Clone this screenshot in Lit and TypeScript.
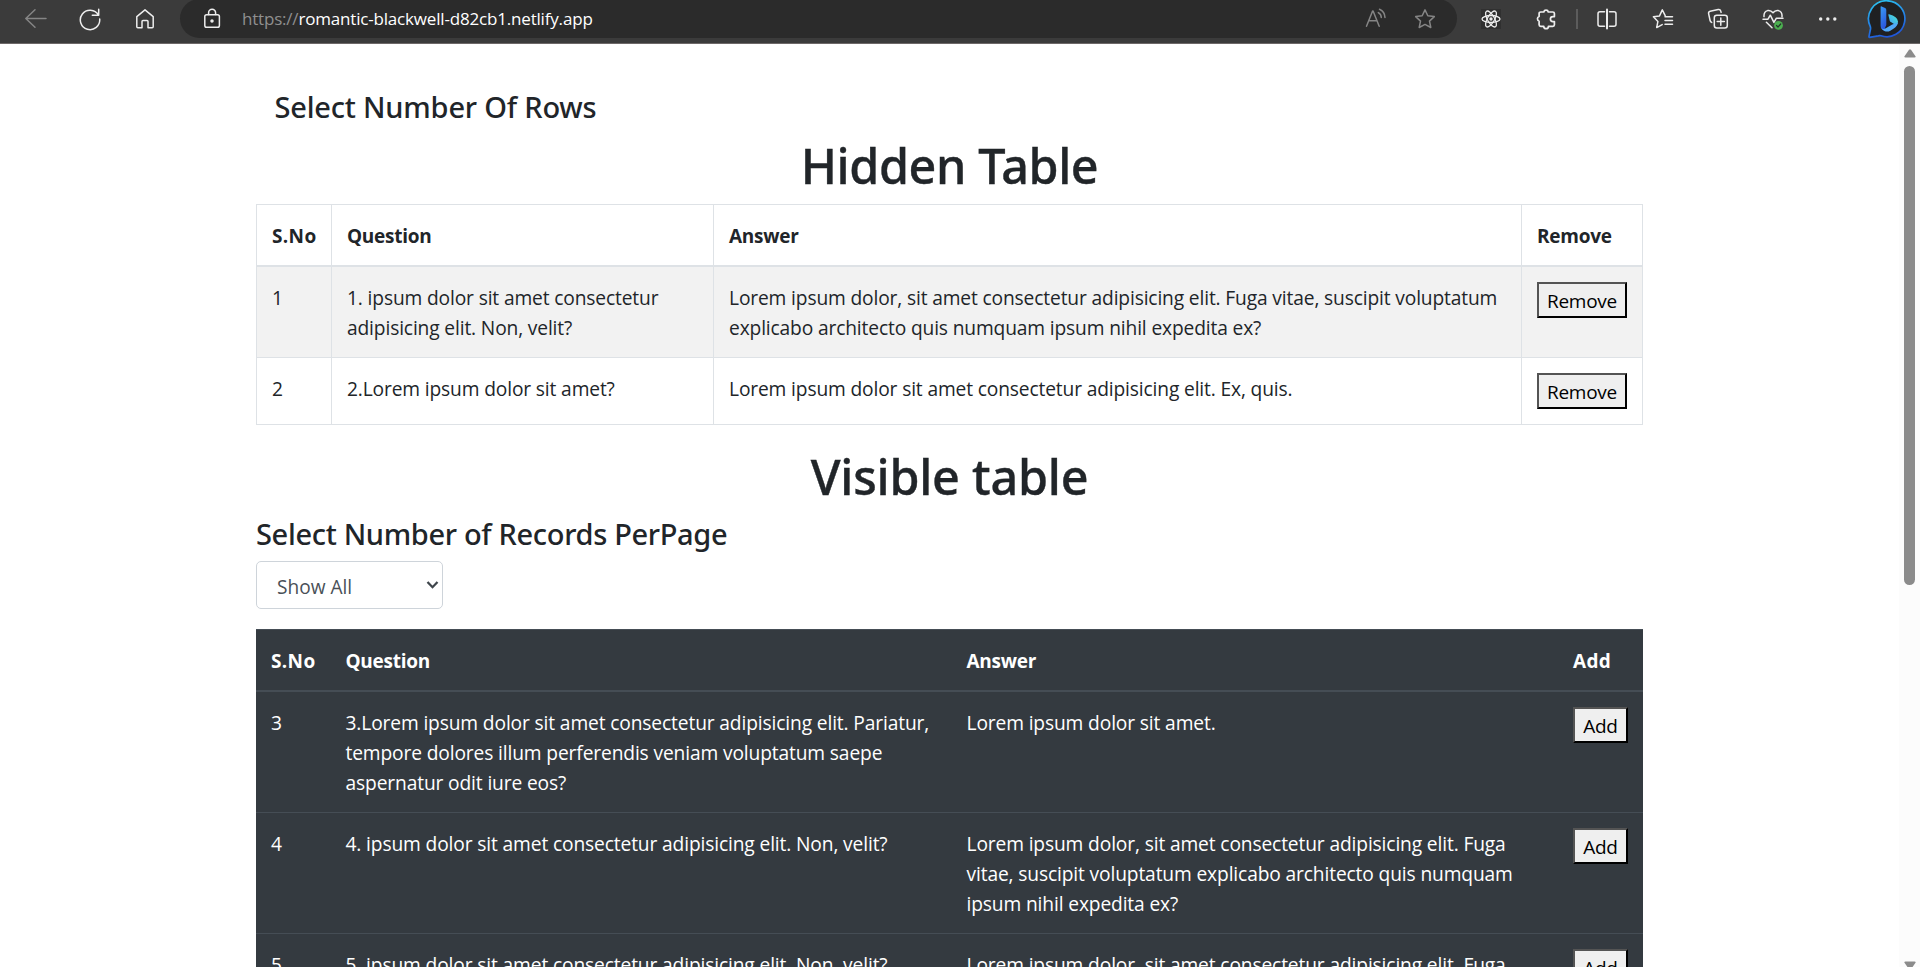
import { LitElement, html, css, svg } from "lit";
import { customElement } from "lit/decorators.js";
import { classMap } from "lit/directives/class-map.js";

interface Row {
  no: number;
  question: string;
  answer: string;
}

const hiddenRows: Row[] = [
  {
    no: 1,
    question: "1. ipsum dolor sit amet consectetur\nadipisicing elit. Non, velit?",
    answer:
      "Lorem ipsum dolor, sit amet consectetur adipisicing elit. Fuga vitae, suscipit voluptatum\nexplicabo architecto quis numquam ipsum nihil expedita ex?",
  },
  {
    no: 2,
    question: "2.Lorem ipsum dolor sit amet?",
    answer: "Lorem ipsum dolor sit amet consectetur adipisicing elit. Ex, quis.",
  },
];

const longAnswer =
  "Lorem ipsum dolor, sit amet consectetur adipisicing elit. Fuga\nvitae, suscipit voluptatum explicabo architecto quis numquam\nipsum nihil expedita ex?";

const visibleRows: Row[] = [
  {
    no: 3,
    question:
      "3.Lorem ipsum dolor sit amet consectetur adipisicing elit. Pariatur,\ntempore dolores illum perferendis veniam voluptatum saepe\naspernatur odit iure eos?",
    answer: "Lorem ipsum dolor sit amet.",
  },
  { no: 4, question: "4. ipsum dolor sit amet consectetur adipisicing elit. Non, velit?", answer: longAnswer },
  { no: 5, question: "5. ipsum dolor sit amet consectetur adipisicing elit. Non, velit?", answer: longAnswer },
];

const icons = {
  back: svg`<path d="M23 11.500H3M12 2.700L2.800 11.500l9.200 8.800"/>`,
  reload: svg`<path d="M20.400 8A9.700 9.700 0 1 0 21.700 12M20.700 2.200v6h-6.400"/>`,
  home: svg`<path d="M3.800 9.600L12 2.800l8.200 6.800v10.200q0 1-1 1h-4.200v-6.200q0-1-1-1h-4q-1 0-1 1v6.200H4.800q-1 0-1-1z"/>`,
  lock: svg`<rect x="4.800" y="7.800" width="14.600" height="12.400" rx="1.800"/><path d="M8.600 7.600V5.800a3.500 3.500 0 0 1 7 0v1.800"/><circle cx="12" cy="14" r="1" fill="currentColor"/>`,
  aloud: svg`<path d="M2.500 19.200L8.600 4h.5l6.100 15.200M4.700 13.800h8.300M14.300 5.600q3 1.700 3 5M15.500 2.300q5.300 2.500 5.500 8.200"/>`,
  star: svg`<path d="M12 2.900l2.800 5.900 6.500.8-4.800 4.500 1.300 6.400L12 17.400l-5.800 3.100 1.300-6.400-4.800-4.500 6.500-.8z"/>`,
  atom: svg`<rect x="2" y="2" width="20" height="20" fill="#303030" stroke="none"/><g stroke-width="1.300"><ellipse cx="12" cy="12" rx="9" ry="3.500"/><ellipse cx="12" cy="12" rx="9" ry="3.500" transform="rotate(60 12 12)"/><ellipse cx="12" cy="12" rx="9" ry="3.500" transform="rotate(120 12 12)"/></g><circle cx="12" cy="12" r="1.700" fill="currentColor" stroke="none"/>`,
  puzzle: svg`<path stroke-width="1.700" d="M6.700 5h3.100a2.300 2.300 0 0 1 4.500 0h4.500q1.600 0 1.600 1.600v3h-1.500a2.500 2.500 0 0 0 0 5h1.500v3.200q0 1.600-1.600 1.600h-4.400a2.300 2.300 0 0 1-4.600 0H6.700q-1.600 0-1.600-1.600v-3.600a2.500 2.500 0 0 1 0-4.700V6.600Q5.100 5 6.700 5z"/>`,
  split: svg`<path d="M9.500 4.800H5q-2 0-2 2v10.400q0 2 2 2h4.500M14.500 4.800H19q2 0 2 2v10.400q0 2-2 2h-4.500"/><path stroke-width="2" d="M12 2.500v19"/>`,
  favorites: svg`<path d="M14.200 8.600L11.300 2.900 8.500 8.900l-6.100.9 4.500 4.600-1.200 6.200 5.500-3M14 9.800h7.500M14 13.600h7.500M14 17.200h7.500"/>`,
  collections: svg`<rect x="8.300" y="8.200" width="13" height="12.800" rx="2.500"/><path d="M14.800 11v7.200M11.200 14.600h7.200M5.700 15.400q-1.300-.5-1.600-1.900L2.600 6.700q-.4-2 1.600-2.500l8-1.700q2-.4 2.500 1.400l.4 1.500"/>`,
  heart: svg`<path d="M3 9.600q-.4-4.900 3.600-6 3.200-.6 5.400 2.200 2.200-2.800 5.400-2.200 4 1.100 3.600 6M2 12.200h5l2.300-4 3.600 7.200 2.500-4.200H22M5.400 15.200l5.600 5.600"/><circle cx="17.500" cy="18.400" r="4.400" fill="#4caf50" stroke="none"/><path d="M15.500 18.500l1.500 1.500 2.700-3" stroke="#23352a" stroke-width="1.200"/>`,
  dots: svg`<g fill="currentColor" stroke="none"><circle cx="4.700" cy="12" r="1.700"/><circle cx="11.800" cy="12" r="1.700"/><circle cx="18.800" cy="12" r="1.700"/></g>`,
};

@customElement("browser-bar")
export class BrowserBar extends LitElement {
  static styles = css`
    :host {
      display: flex;
      height: 43px;
      align-items: flex-start;
      background: #3b3b3b;
      border-bottom: 1px solid #6d6868;
      color: #ededed;
      font-family: "Open Sans", "Noto Sans", sans-serif;
    }
    .icon {
      width: 24px;
      height: 24px;
      flex: none;
      margin-top: 7px;
      fill: none;
      stroke: currentColor;
      stroke-width: 1.5;
      stroke-linejoin: round;
      stroke-linecap: round;
    }
    .dim {
      color: #858585;
    }
    .nav {
      display: flex;
      gap: 31px;
      padding: 0 23px;
      width: 134px;
    }
    .address {
      display: flex;
      width: 1277px;
      height: 39px;
      margin-top: -1px;
      border-radius: 20px;
      background: #2b2b2b;
      box-sizing: border-box;
      padding: 1px 20px 0;
    }
    .url {
      flex: 1;
      padding-left: 18px;
      line-height: 38px;
      font-size: 17px;
      letter-spacing: -0.180px;
      color: #fff;
      white-space: nowrap;
    }
    .scheme {
      color: #8f8f8f;
      letter-spacing: -0.2px;
    }
    .address .icon + .icon {
      margin-left: 25px;
    }
    .ext {
      display: flex;
      gap: 31px;
      margin-left: 22px;
    }
    .sep {
      width: 2px;
      height: 20px;
      margin: 9px 17px 0 18px;
      background: #5c5c5c;
    }
    .tools {
      display: flex;
      gap: 31px;
    }
    .tools .icon:first-child {
      margin-right: 1px;
    }
    .bing {
      width: 40px;
      height: 40px;
      margin-left: 27px;
      flex: none;
    }
  `;

  private icon(name: keyof typeof icons, dim = false) {
    return html`<svg class=${classMap({ icon: true, dim })} viewBox="0 0 24 24">${icons[name]}</svg>`;
  }

  render() {
    return html`
      <div class="nav">${this.icon("back", true)}${this.icon("reload")}${this.icon("home")}</div>
      <div class="address">
        ${this.icon("lock")}
        <div class="url"><span class="scheme">https://</span>romantic-blackwell-d82cb1.netlify.app</div>
        ${this.icon("aloud", true)}${this.icon("star", true)}
      </div>
      <div class="ext">${this.icon("atom")}${this.icon("puzzle")}</div>
      <div class="sep"></div>
      <div class="tools">
        ${this.icon("split")}${this.icon("favorites")}${this.icon("collections")}${this.icon("heart")}${this.icon("dots")}
      </div>
      <svg class="bing" viewBox="0 0 40 40">
        <defs>
          <linearGradient id="ring" x1="0.2" y1="0" x2="0.500" y2="1">
            <stop offset="0" stop-color="#2cc3ee" />
            <stop offset="0.550" stop-color="#2483e6" />
            <stop offset="1" stop-color="#2056d8" />
          </linearGradient>
          <linearGradient id="stem" x1="0" y1="0" x2="0.300" y2="1">
            <stop offset="0" stop-color="#3a9cf4" />
            <stop offset="1" stop-color="#2a55dd" />
          </linearGradient>
          <linearGradient id="bowl" x1="0" y1="1" x2="1" y2="0">
            <stop offset="0" stop-color="#3f9af5" />
            <stop offset="1" stop-color="#4be3d5" />
          </linearGradient>
        </defs>
        <path d="M20.500 0.800a18 18 0 1 1-6.500 35q-1.200-.4-2.600.1l-8.800 1.500q-.8 0-.6-1l1.500-7.400q.2-1.300-.3-2.600A18 18 0 0 1 20.500.8z" fill="#1f2022" stroke="url(#ring)" stroke-width="1.700" />
        <path d="M21.300 14.800q0-.7.700-.5 8.600 2.200 9 7.300.2 3-2.500 5-1-3.200-4.200-4.400-1.200-.5-1.500-1.300z" fill="url(#bowl)" />
        <path d="M13.600 7q0-1 1-.6l3.500 1.700q1.200.6 1.200 2v15l-2.400 5.300q-3.300-1-3.300-4.800z" fill="url(#stem)" />
        <path d="M13.800 26.700q1.300 3.300 5 1.600l6.500-3.800q3-1.200 5.500-2-.3 3.600-4 6l-3.500 2.200q-3 1.700-6 .2-2.900-1.300-3.500-4.200z" fill="#51a9f8" />
      </svg>
    `;
  }
}

@customElement("page-scrollbar")
export class PageScrollbar extends LitElement {
  static styles = css`
    :host {
      display: flex;
      flex-direction: column;
      align-items: center;
      width: 21px;
      box-sizing: border-box;
      padding: 5px 0 0 0;
      background: #fcfcfc;
    }
    .arrow {
      width: 12px;
      height: 9px;
      flex: none;
      fill: #8b8b8b;
    }
    .thumb {
      width: 11px;
      height: 519px;
      flex: none;
      margin-top: 8px;
      border-radius: 6px;
      background: #8b8b8b;
    }
    .down {
      margin-top: 376px;
    }
  `;

  render() {
    return html`
      <svg class="arrow" viewBox="0 0 12 9"><path d="M5 .8q1-1 2 0l4.500 6.400q.6 1.300-1 1.300h-9q-1.600 0-1-1.300z" /></svg>
      <div class="thumb"></div>
      <svg class="arrow down" viewBox="0 0 12 9"><path d="M1.500.5h9q1.600 0 1 1.300L7 8.200q-1 1-2 0L.5 1.800Q-.1.500 1.500.5z" /></svg>
    `;
  }
}

@customElement("question-table")
export class QuestionTable extends LitElement {
  static properties = {
    rows: { attribute: false },
    action: { type: String },
    dark: { type: Boolean },
  };

  declare rows: Row[];
  declare action: string;
  declare dark: boolean;

  static styles = css`
    :host {
      display: block;
    }
    .table {
      width: 1387px;
      table-layout: fixed;
      border-collapse: separate;
      border-spacing: 0;
      font-size: 19.200px;
      line-height: 30px;
      letter-spacing: -0.140px;
      border-top: 1px solid #dee2e6;
      border-left: 1px solid #dee2e6;
    }
    .head,
    .cell {
      box-sizing: border-box;
      padding: 16px 14px 14px 15px;
      text-align: left;
      vertical-align: top;
      white-space: pre;
      border-right: 1px solid #dee2e6;
      border-bottom: 1px solid #dee2e6;
    }
    .head {
      font-size: 19px;
      font-weight: 700;
      letter-spacing: -0.250px;
      border-bottom-width: 2px;
    }
    .short {
      letter-spacing: 0.350px;
    }
    .row:nth-child(odd) .cell {
      background: #f2f2f2;
    }
    .no { width: 75px; }
    .question { width: 382px; }
    .answer { width: 808px; }
    .action { width: 121px; }

    .dark {
      color: #fff;
      background: #343a40;
      border-top-color: #454d55;
      border-left: 0;
      letter-spacing: -0.130px;
    }
    .dark .head,
    .dark .cell {
      border-right: 0;
      border-color: #454d55;
    }
    .dark .row .cell {
      background: none;
    }
    .dark .no { width: 74.500px; }
    .dark .question { width: 621px; }
    .dark .answer { width: 606.500px; }
    .dark .action { width: 85px; }

    .button {
      display: block;
      box-sizing: border-box;
      width: 90px;
      height: 36px;
      margin: -1px 0 1px;
      padding: 1px 0 0;
      border: 2px solid;
      border-color: #545454 #000 #000 #545454;
      border-radius: 0;
      background: #efefef;
      color: #000;
      font: 19px/30px "Open Sans", "Noto Sans", sans-serif;
      letter-spacing: -0.250px;
      text-align: center;
    }
    .dark .button {
      width: 55px;
    }
  `;

  render() {
    return html`
      <table class=${classMap({ table: true, dark: this.dark })}>
        <colgroup>
          <col class="no" /><col class="question" /><col class="answer" /><col class="action" />
        </colgroup>
        <thead>
          <tr>
            <th class="head short">S.No</th>
            <th class="head">Question</th>
            <th class="head">Answer</th>
            <th class=${classMap({ head: true, short: this.action.length < 5 })}>${this.action}</th>
          </tr>
        </thead>
        <tbody>
          ${this.rows.map(
            (r) => html`<tr class="row">
              <td class="cell">${r.no}</td>
              <td class="cell">${r.question}</td>
              <td class="cell">${r.answer}</td>
              <td class="cell"><button class="button">${this.action}</button></td>
            </tr>`,
          )}
        </tbody>
      </table>
    `;
  }
}

@customElement("app-root")
export class AppRoot extends LitElement {
  static styles = css`
    :host {
      display: flex;
      flex-direction: column;
      height: 967px;
      overflow: hidden;
      background: #fff;
      color: #212529;
      font-family: "Open Sans", "Noto Sans", sans-serif;
    }
    .viewport {
      flex: 1;
      min-height: 0;
      display: flex;
      overflow: hidden;
    }
    .page {
      flex: 1;
      padding: 45px 0 0 256px;
      overflow: hidden;
    }
    .content {
      width: 1387px;
    }
    .title,
    .label {
      margin: 0;
      font-family: "Noto Sans", sans-serif;
      font-weight: 500;
      white-space: nowrap;
    }
    .title {
      margin: 10px 0 9px;
      font-size: 48.500px;
      line-height: 60px;
      letter-spacing: -0.420px;
      text-align: center;
      -webkit-text-stroke: 0.400px currentColor;
    }
    .title.visible {
      margin: 21px 0 10px;
      letter-spacing: -0.230px;
    }
    .label {
      font-size: 29px;
      line-height: 36px;
      letter-spacing: -0.330px;
    }
    .rows {
      padding-left: 18.500px;
      letter-spacing: -0.200px;
    }
    .select {
      display: flex;
      align-items: center;
      justify-content: space-between;
      box-sizing: border-box;
      width: 187px;
      height: 48px;
      margin: 9px 0 20px;
      padding: 3px 3px 0 20px;
      border: 1px solid #ced4da;
      border-radius: 5px;
      color: #495057;
      font-size: 19.100px;
    }
    .chevron {
      width: 13px;
      height: 10px;
      margin-bottom: 3px;
      fill: none;
      stroke: #3f464c;
      stroke-width: 2.300;
    }
  `;

  render() {
    return html`
      <browser-bar></browser-bar>
      <div class="viewport">
        <main class="page">
          <div class="content">
            <h3 class="label rows">Select Number Of Rows</h3>
            <h1 class="title">Hidden Table</h1>
            <question-table .rows=${hiddenRows} action="Remove"></question-table>
            <h1 class="title visible">Visible table</h1>
            <h3 class="label">Select Number of Records PerPage</h3>
            <div class="select">
              Show All
              <svg class="chevron" viewBox="0 0 13 10"><path d="M1.500 2l5 5.200L11.500 2" /></svg>
            </div>
            <question-table .rows=${visibleRows} action="Add" dark></question-table>
          </div>
        </main>
        <page-scrollbar></page-scrollbar>
      </div>
    `;
  }
}
